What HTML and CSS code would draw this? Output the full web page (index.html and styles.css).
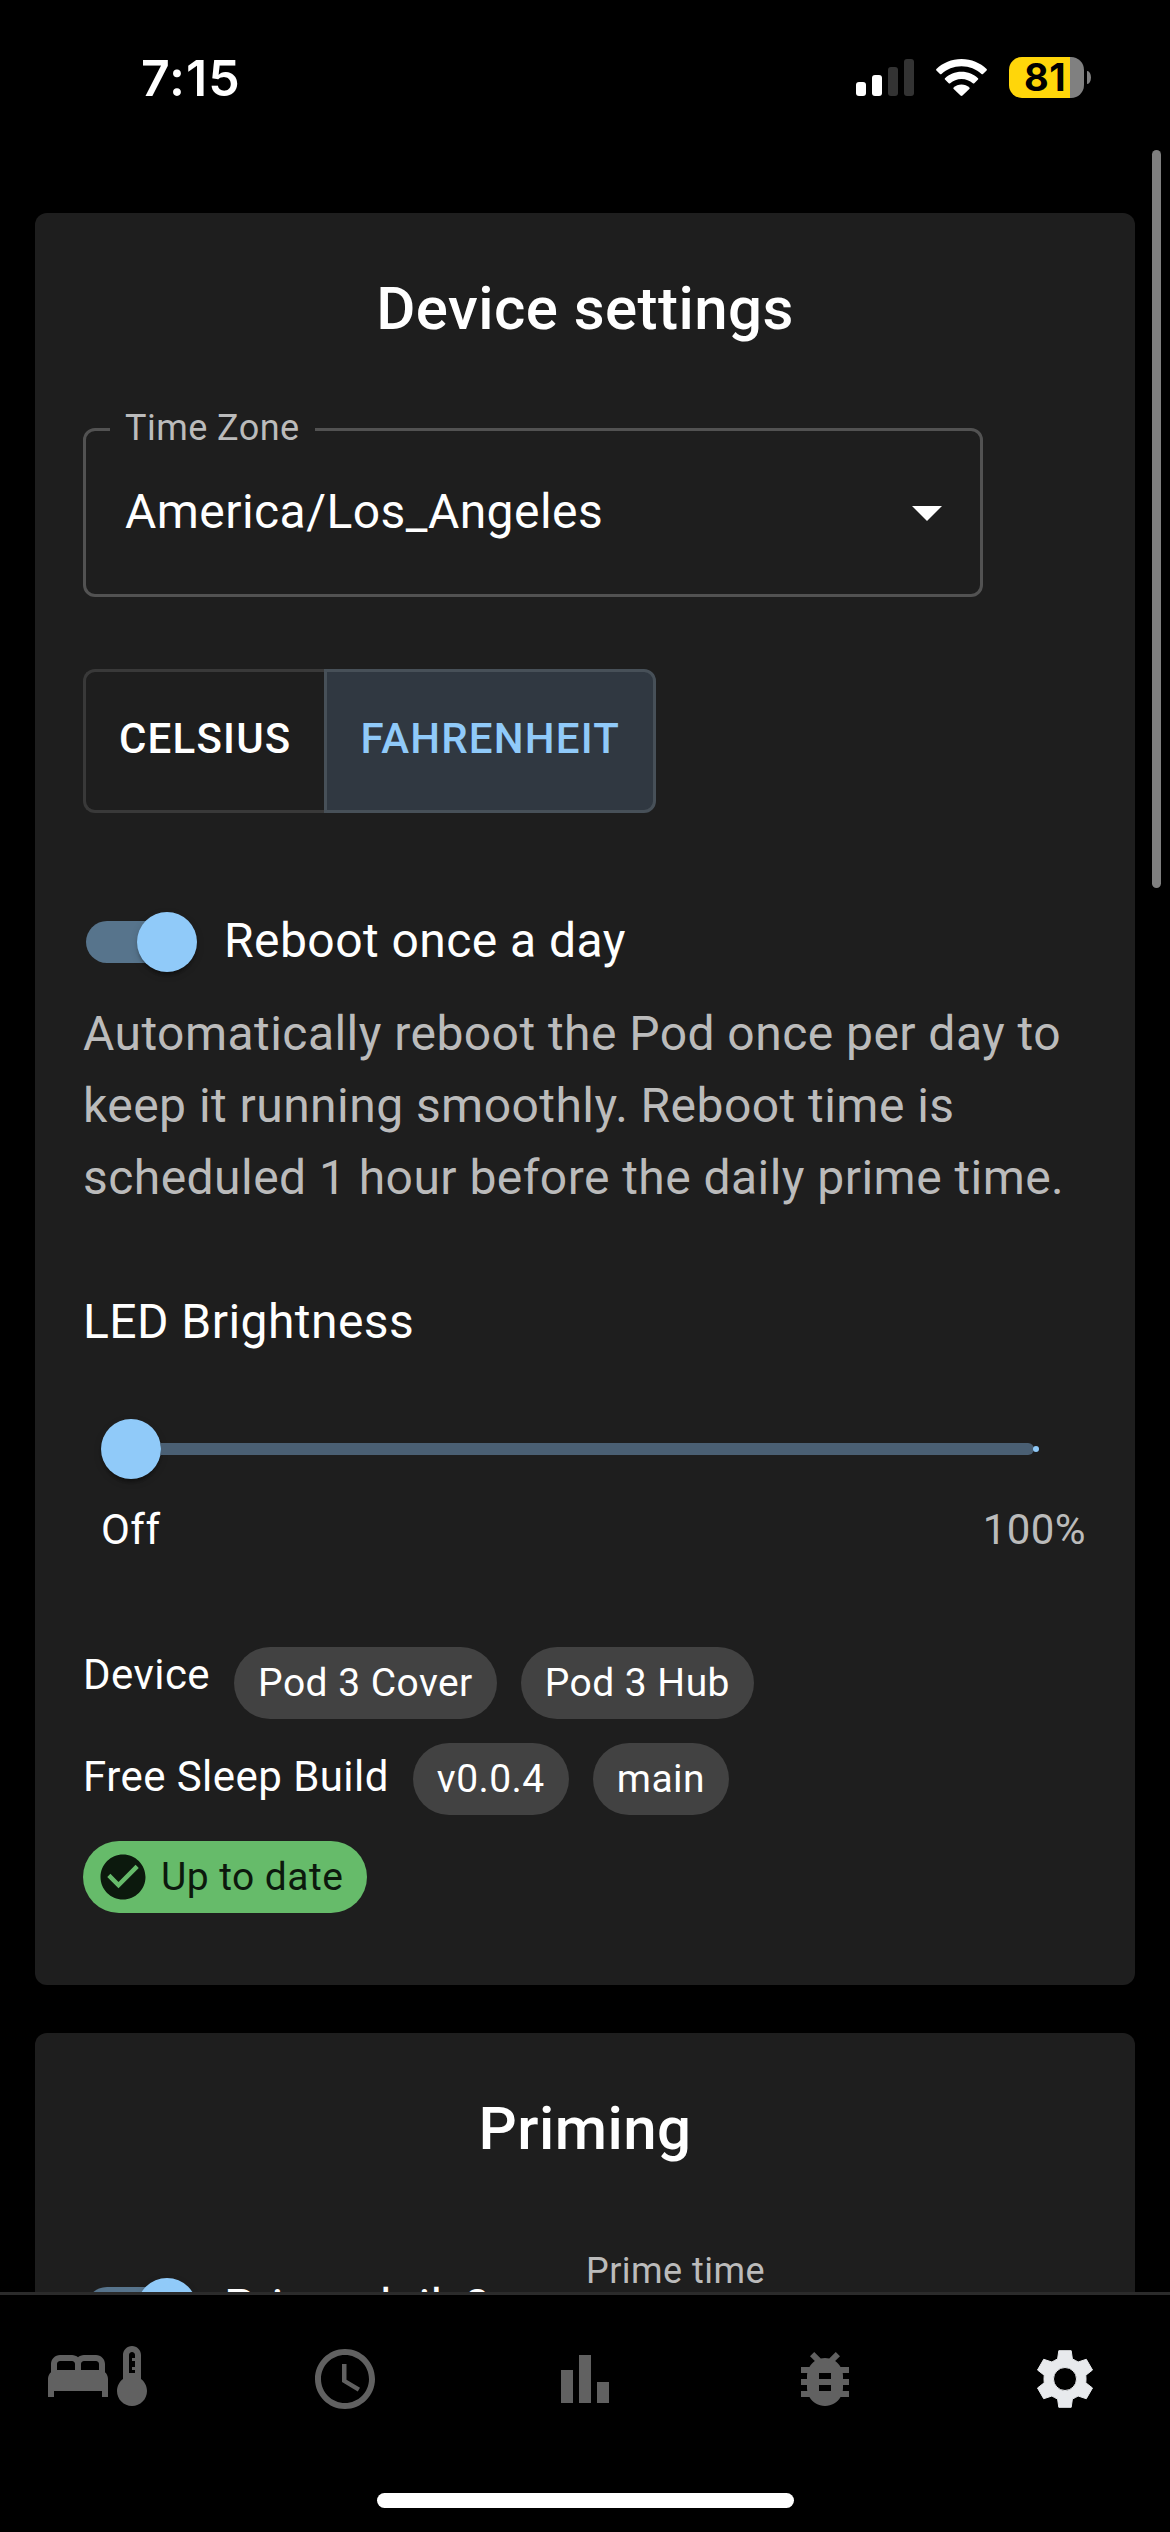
FILE: index.html
```html
<!DOCTYPE html>
<html lang="en">
<head>
<meta charset="utf-8">
<title>Free Sleep – Settings</title>
<link rel="stylesheet" href="styles.css">
</head>
<body>
<div class="screen">
  <header class="status-bar">
    <span class="time">7:15</span>
    <div class="status-icons">
      <svg class="signal" viewBox="0 0 58 37" fill="#fff"><rect y="23" width="10" height="14" rx="3"/><rect x="16" y="16" width="10" height="21" rx="3"/><g fill="#333"><rect x="32" y="8" width="10" height="29" rx="3"/><rect x="48" width="10" height="37" rx="3"/></g></svg>
      <svg class="wifi" viewBox="0 0 51 37" fill="#fff"><path d="M25.500 0C35.500 0 44.200 4 50.600 9.900Q51.300 10.700 50.600 11.400L47 15Q46.300 15.600 45.500 15C40.300 10.200 33.300 7.300 25.500 7.300S10.700 10.200 5.500 15Q4.700 15.600 4 15L.4 11.400Q-.3 10.700.4 9.900C6.800 4 15.500 0 25.500 0Z"/><path d="M25.500 12.700C32 12.700 37.800 15.200 42 19.200Q42.700 19.900 42 20.600L38.300 24.300Q37.600 24.900 36.800 24.300C33.800 21.600 29.900 20 25.500 20S17.200 21.600 14.200 24.300Q13.400 24.900 12.700 24.300L9 20.600Q8.300 19.900 9 19.200C13.200 15.200 19 12.700 25.500 12.700Z"/><path d="M25.500 25.400C28.500 25.400 31.300 26.600 33.300 28.400Q34 29.100 33.300 29.900L26.500 36.500Q25.500 37.400 24.500 36.500L17.700 29.900Q17 29.100 17.700 28.400C19.700 26.600 22.500 25.400 25.500 25.400Z"/></svg>
      <div class="battery"><div class="battery-body">81</div><div class="battery-tip"></div></div>
    </div>
  </header>

  <main class="content">
    <section class="card">
      <h2 class="card-title">Device settings</h2>
      <fieldset class="select">
        <legend>Time Zone</legend>
        <span class="select-value">America/Los_Angeles</span>
        <svg class="icon" viewBox="0 0 24 24"><path d="m7 10 5 5 5-5z"/></svg>
      </fieldset>
      <div class="toggle-group">
        <button class="toggle">CELSIUS</button><button class="toggle selected">FAHRENHEIT</button>
      </div>
      <label class="switch-row"><span class="switch"><span class="thumb"></span></span><span class="switch-label">Reboot once a day</span></label>
      <p class="help">Automatically reboot the Pod once per day to keep it running smoothly. Reboot time is scheduled 1 hour before the daily prime time.</p>
      <h3 class="field-title">LED Brightness</h3>
      <div class="slider"><span class="thumb"></span><span class="rail"></span><span class="mark"></span></div>
      <div class="slider-labels"><span class="active">Off</span><span>100%</span></div>
      <div class="info-row device-row"><span class="info-label">Device</span><span class="chip">Pod 3 Cover</span><span class="chip">Pod 3 Hub</span></div>
      <div class="info-row build-row"><span class="info-label">Free Sleep Build</span><span class="chip">v0.0.4</span><span class="chip">main</span></div>
      <div class="info-row"><span class="chip success"><svg viewBox="0 0 24 24"><path d="M12 2C6.480 2 2 6.480 2 12s4.480 10 10 10 10-4.480 10-10S17.520 2 12 2zm-2 15-5-5 1.410-1.410L10 14.170l7.590-7.590L19 8l-9 9z"/></svg>Up to date</span></div>
    </section>

    <section class="card priming">
      <h2 class="card-title">Priming</h2>
      <div class="prime-row">
        <label class="switch-row"><span class="switch"><span class="thumb"></span></span><span class="switch-label">Prime daily?</span></label>
        <span class="prime-label">Prime time</span>
      </div>
    </section>
  </main>

  <nav class="bottom-nav">
    <a class="nav-item pair"><svg class="icon" viewBox="0 0 24 24"><path d="M21 10.780V8c0-1.650-1.350-3-3-3h-4c-.77 0-1.470.3-2 .78-.53-.48-1.230-.78-2-.78H6C4.350 5 3 6.350 3 8v2.780c-.61.550-1 1.340-1 2.220v6h2v-2h16v2h2v-6c0-.88-.39-1.670-1-2.220zM14 7h4c.55 0 1 .45 1 1v2h-6V8c0-.55.450-1 1-1zM5 8c0-.55.450-1 1-1h4c.55 0 1 .45 1 1v2H5V8z"/></svg><svg class="icon" viewBox="0 0 24 24"><path d="M15 13V5c0-1.660-1.340-3-3-3S9 3.340 9 5v8c-1.210.910-2 2.370-2 4 0 2.760 2.240 5 5 5s5-2.240 5-5c0-1.630-.79-3.090-2-4zm-4-8c0-.55.450-1 1-1s1 .45 1 1v1h-1v1h1v2h-1v1h1v1h-2V5z"/></svg></a>
    <a class="nav-item"><svg class="icon" viewBox="0 0 24 24"><path d="M11.990 2C6.470 2 2 6.480 2 12s4.470 10 9.990 10C17.520 22 22 17.520 22 12S17.520 2 11.990 2zM12 20c-4.420 0-8-3.580-8-8s3.580-8 8-8 8 3.580 8 8-3.580 8-8 8zM12.500 7H11v6l5.250 3.150.75-1.230-4.500-2.670z"/></svg></a>
    <a class="nav-item"><svg class="icon" viewBox="0 0 24 24"><path d="M4 9h4v11H4zM16 13h4v7h-4zM10 4h4v16h-4z"/></svg></a>
    <a class="nav-item"><svg class="icon" viewBox="0 0 24 24"><path d="M20 8h-2.810c-.45-.78-1.070-1.450-1.820-1.960L17 4.410 15.590 3l-2.170 2.170C12.960 5.060 12.490 5 12 5s-.96.060-1.410.170L8.410 3 7 4.410l1.620 1.630C7.880 6.550 7.260 7.220 6.810 8H4v2h2.090c-.05.330-.09.660-.09 1v1H4v2h2v1c0 .34.040.670.090 1H4v2h2.810c1.040 1.790 2.970 3 5.190 3s4.150-1.210 5.190-3H20v-2h-2.090c.050-.33.090-.66.090-1v-1h2v-2h-2v-1c0-.34-.04-.67-.09-1H20V8zm-6 8h-4v-2h4v2zm0-4h-4v-2h4v2z"/></svg></a>
    <a class="nav-item current"><svg class="icon gear" viewBox="0 0 72 72"><path fill-rule="evenodd" d="M29.800 7.700H42.200L43.400 16Q46.500 17.300 49.100 19L57.300 16.300L63.500 27L56.800 32.200Q57.200 36 56.800 39.800L63.500 45L57.300 55.700L49.100 53Q46.500 54.700 43.400 56L42.200 64.300H29.800L28.600 56Q25.500 54.700 22.900 53L14.700 55.700L8.500 45L15.200 39.800Q14.800 36 15.200 32.200L8.500 27L14.700 16.300L22.900 19Q25.500 17.300 28.600 16ZM36 24.500A11.500 11.500 0 1 0 36 47.500A11.500 11.500 0 1 0 36 24.500Z"/></svg></a>
  </nav>
  <div class="scrollbar"></div>
  <div class="home-indicator"></div>
</div>
</body>
</html>
```
FILE: styles.css
```css
* { box-sizing: border-box; }

body {
  margin: 0;
  background: #000;
  color: #fff;
  font: 400 48px/72px Roboto, "Noto Sans", sans-serif;
  letter-spacing: 0.00938em;
}

.screen {
  position: relative;
  width: 1170px;
  height: 2532px;
  display: flex;
  flex-direction: column;
  overflow: hidden;
}

/* Status bar */
.status-bar {
  flex: none;
  height: 165px;
  padding: 57px 79px 0 141px;
  display: flex;
  justify-content: space-between;
  align-items: flex-start;
  font-family: Inter, sans-serif;
}
.time {
  font-size: 50px;
  font-weight: 600;
  line-height: 42px;
  letter-spacing: 1px;
}
.status-icons { display: flex; align-items: center; height: 41px; }
.signal { width: 58px; height: 37px; margin-right: 22px; }
.wifi { width: 51px; height: 37px; margin-right: 22px; }
.battery { display: flex; align-items: center; gap: 3px; }
.battery-body {
  width: 75px;
  height: 41px;
  border-radius: 13px;
  background: linear-gradient(90deg, #ffd60a 61px, #808080 61px);
  color: #000;
  font-size: 38px;
  font-weight: 700;
  line-height: 41px;
  letter-spacing: 0.5px;
  padding-left: 15px;
}
.battery-tip { width: 4px; height: 13px; border-radius: 0 4px 4px 0 / 0 7px 7px 0; background: #808080; }

/* Cards */
.content {
  flex: 1;
  min-height: 0;
  overflow: hidden;
  padding: 48px 35px 0;
  display: flex;
  flex-direction: column;
  gap: 48px;
}
.card {
  flex: none;
  height: 1772px;
  padding: 48px;
  border-radius: 12px;
  background: #1e1e1e;
  display: flex;
  flex-direction: column;
  align-items: flex-start;
}
.card-title {
  align-self: stretch;
  margin: 0;
  text-align: center;
  font-size: 60px;
  font-weight: 500;
  line-height: 96px;
  letter-spacing: 0.0075em;
}

/* Outlined select */
.select {
  width: 900px;
  height: 189px;
  margin: 51px 0 0;
  padding: 26px 17px 0 39px;
  border: 3px solid #525252;
  border-radius: 12px;
  display: flex;
  align-items: flex-start;
  justify-content: space-between;
}
.select legend {
  height: 42px;
  margin-left: -15px;
  padding: 0 15px;
  color: #bbb;
  font-size: 36px;
  line-height: 40px;
}
.icon { flex: none; width: 72px; height: 72px; fill: currentColor; display: block; }

/* Unit toggle */
.toggle-group { display: flex; margin-top: 72px; }
.toggle {
  height: 144px;
  padding: 0 33px 5px;
  border: 3px solid #393939;
  border-right: 0;
  border-radius: 12px 0 0 12px;
  background: none;
  color: #fff;
  font: 500 42px/74px Roboto, sans-serif;
  letter-spacing: 0.02857em;
}
.toggle.selected {
  border: 3px solid #475058;
  border-radius: 0 12px 12px 0;
  background: #303841;
  color: #90caf9;
}

/* Switch */
.switch-row { display: flex; align-items: center; height: 114px; margin-top: 72px; }
.switch {
  width: 102px;
  height: 42px;
  margin: 0 36px 0 3px;
  border-radius: 21px;
  background: #57748c;
  display: flex;
  align-items: center;
  justify-content: flex-end;
}
.switch .thumb { margin-right: -9px; }
.switch-label { padding-bottom: 3px; }
.thumb {
  flex: none;
  width: 60px;
  height: 60px;
  border-radius: 50%;
  background: #90caf9;
  box-shadow: 0 6px 3px -3px rgba(0,0,0,.2), 0 3px 3px rgba(0,0,0,.14), 0 3px 9px rgba(0,0,0,.12);
}
.help { margin: -1px 0 0; color: #bbb; }

/* Slider */
.field-title { margin: 72px 0 0; font-size: 48px; font-weight: 400; line-height: 72px; }
.slider { display: flex; align-items: center; height: 60px; margin: 61px 0 0 18px; }
.rail { width: 873px; height: 12px; border-radius: 0 6px 6px 0; background: #4a5f73; }
.mark { width: 6px; height: 6px; margin-left: -1px; border-radius: 3px; background: #90caf9; }
.slider-labels {
  width: 985px;
  margin: 21px 0 0 18px;
  display: flex;
  justify-content: space-between;
  color: #bbb;
  font-size: 42px;
  line-height: 60px;
  letter-spacing: 0.01071em;
}
.slider-labels .active { color: #fff; }

/* Device details */
.info-row { display: flex; gap: 24px; height: 72px; }
.device-row { margin-top: 87px; }
.build-row { margin: 24px 0 26px; }
.info-label { font-size: 42px; line-height: 55px; letter-spacing: 0.01071em; }
.build-row .info-label { line-height: 67px; }
.chip {
  display: flex;
  align-items: center;
  height: 72px;
  padding: 0 24px;
  border-radius: 36px;
  background: #424242;
  font-size: 39px;
}
.chip.success { padding-left: 13px; background: #66bb6a; color: #0c190d; }
.chip.success svg { width: 54px; height: 54px; margin-right: 11px; fill: currentColor; }

/* Priming card */
.prime-row { display: flex; align-items: flex-start; justify-content: space-between; width: 682px; }
.priming .switch-row { margin-top: 74px; }
.prime-label { margin-top: 75px; color: #bbb; font-size: 36px; line-height: 38px; }

/* Bottom navigation */
.bottom-nav {
  flex: none;
  height: 240px;
  padding: 48px 69px 0 42px;
  border-top: 3px solid #2b2b2b;
  background: #000;
  color: #616161;
  display: flex;
  align-items: flex-start;
  justify-content: space-between;
}
.nav-item.pair { display: flex; width: 99px; margin-top: -3px; }
.pair .icon + .icon { margin-left: -18px; }
.current { color: #e8eaed; }
.gear { stroke: currentColor; stroke-width: 1; stroke-linejoin: round; }

.scrollbar { position: absolute; right: 9px; top: 150px; width: 9px; height: 738px; border-radius: 5px; background: #7f7f7f; }
.home-indicator { position: absolute; left: 377px; bottom: 24px; width: 417px; height: 15px; border-radius: 8px; background: #fff; }
```
